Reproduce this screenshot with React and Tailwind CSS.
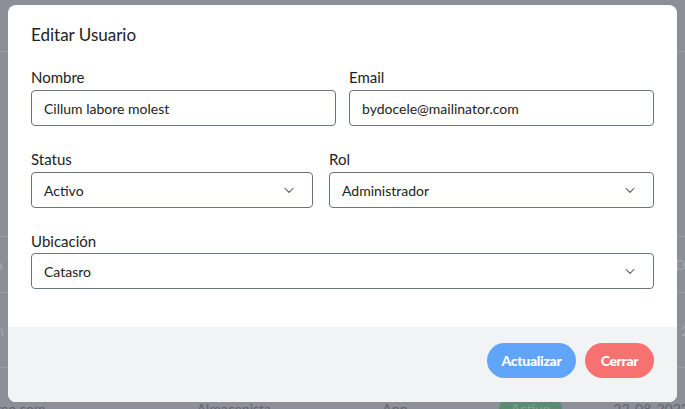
import React from 'react'

function Chevron() {
  return (
    <svg width="14" height="14" viewBox="0 0 24 24" fill="none" stroke="#4b5563" strokeWidth="1.8" strokeLinecap="round" strokeLinejoin="round">
      <path d="M5 9l7 7 7-7" />
    </svg>
  )
}

function Field({ label, value }) {
  return (
    <div className="flex flex-col">
      <label className="text-[15px] leading-5 text-[#222] mb-[3px]">{label}</label>
      <div className="h-9 border border-[#6b7280] rounded-[4px] px-[12px] flex items-center text-[14px] text-[#222]">{value}</div>
    </div>
  )
}

function SelectField({ label, value, mb = 'mb-[3px]' }) {
  return (
    <div className="flex flex-col">
      <label className={`text-[15px] leading-5 text-[#222] ${mb}`}>{label}</label>
      <div className="h-9 border border-[#6b7280] rounded-[4px] pl-[12px] pr-[16px] flex items-center justify-between text-[14px] text-[#222]">
        <span>{value}</span>
        <Chevron />
      </div>
    </div>
  )
}

export default function App() {
  return (
    <div className="relative w-[685px] h-[409px] overflow-hidden bg-[#8c8f98]" style={{ fontFamily: 'Lato, "Open Sans", sans-serif' }}>
      {/* tabla de fondo bajo el overlay */}
      <div className="flex flex-col text-[14px] text-[#62656d]">
        <div className="h-[52px] border-b border-[#9a9da5]" />
        <div className="h-[185px] border-b border-[#9a9da5]" />
        <div className="h-[56px] border-b border-[#9a9da5] flex items-center justify-between">
          <span className="-ml-1 text-[#a4a7ae]">a</span>
          <span className="-mr-2 text-[#a4a7ae]">De</span>
        </div>
        <div className="h-[75px] border-b border-[#9a9da5] flex items-center justify-between">
          <span className="-ml-1 text-[#a4a7ae]">n</span>
          <span className="-mr-1 text-[#a4a7ae]">2</span>
        </div>
        <div className="h-[41px] flex items-end justify-between pb-0 translate-y-[10px]">
          <span className="-ml-3">oreo.com</span>
          <span className="ml-[100px]">Almacenista</span>
          <span className="ml-[60px]">App</span>
          <span className="bg-[#5c8a73] text-[#7aa58c] rounded-full px-3 ml-[40px]">Activo</span>
          <span className="-mr-1">22-08-2022</span>
        </div>
      </div>

      {/* modal */}
      <div className="absolute left-[8px] top-[5px] w-[669px] h-[397px] bg-white rounded-lg overflow-hidden flex flex-col">
        <div className="flex-1 px-[23px] pt-[18px]">
          <h3 className="text-[17px] leading-6 text-[#222] mb-5">Editar Usuario</h3>
          <div className="grid grid-cols-2 gap-[13px]">
            <Field label="Nombre" value="Cillum labore molest" />
            <Field label="Email" value="bydocele@mailinator.com" />
          </div>
          <div className="grid grid-cols-[282px_1fr] gap-4 mt-[23px]">
            <SelectField label="Status" value="Activo" />
            <SelectField label="Rol" value="Administrador" />
          </div>
          <div className="mt-[23px]">
            <SelectField label="Ubicación" value="Catasro" mb="mb-[2px]" />
          </div>
        </div>
        <div className="h-[75px] bg-[#f1f3f5] flex items-start justify-end gap-[9px] pt-[16px] pr-[23px]">
          <button className="h-[35px] w-[89px] rounded-full bg-[#60a5fa] text-white text-[14px] font-black tracking-[-0.3px]">Actualizar</button>
          <button className="h-[35px] w-[69px] rounded-full bg-[#f87171] text-white text-[14px] font-black tracking-[-0.3px]">Cerrar</button>
        </div>
      </div>
    </div>
  )
}
